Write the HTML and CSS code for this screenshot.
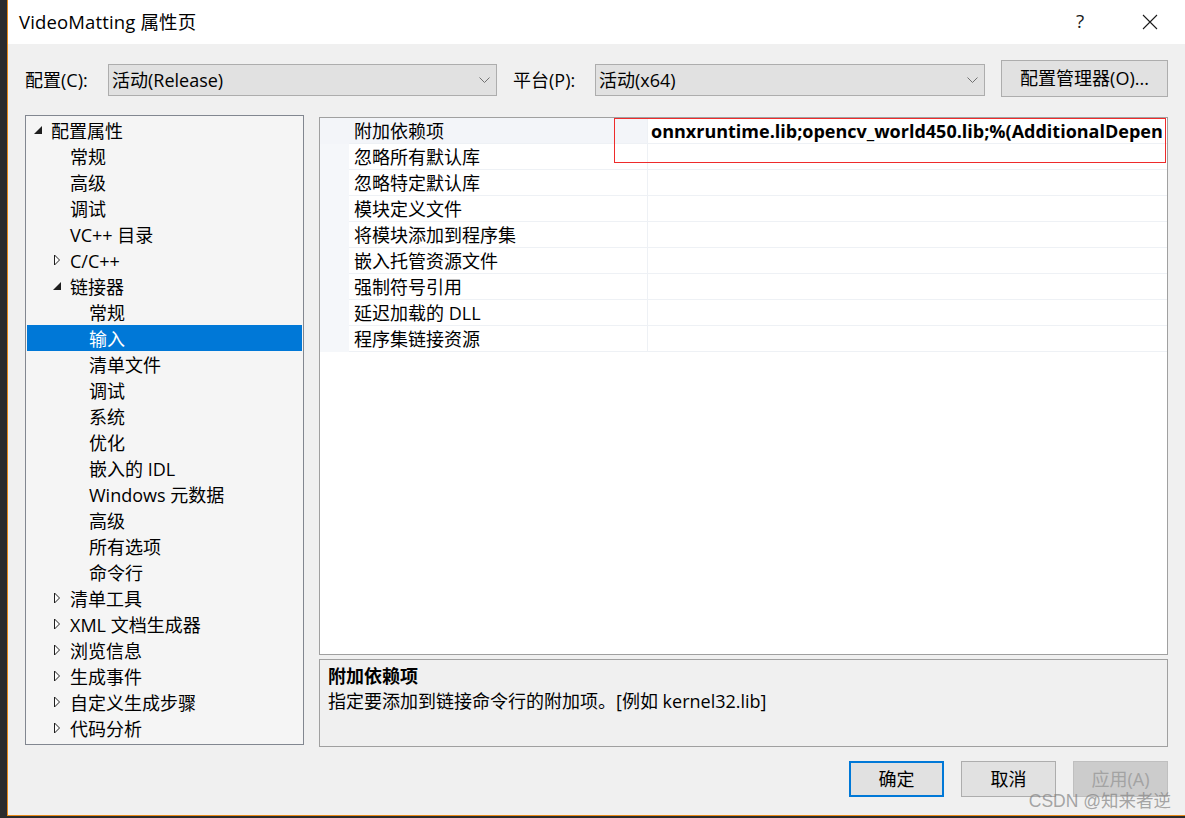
FILE: index.html
```html
<!DOCTYPE html>
<html lang="zh-CN">
<head>
<meta charset="utf-8">
<title>VideoMatting 属性页</title>
<link rel="stylesheet" href="styles.css">
</head>
<body>
<div class="window">
  <div class="titlebar">
    <div class="title">VideoMatting 属性页</div>
    <div class="caption">
      <span class="cap-btn help">?</span>
      <span class="cap-btn close"><svg width="16" height="16" viewBox="0 0 16 16"><path d="M1 1 L15 15 M15 1 L1 15" stroke="#1a1a1a" stroke-width="1.1" fill="none"/></svg></span>
    </div>
  </div>

  <div class="content">
    <div class="toolbar">
      <span class="tb-label lab1">配置(C):</span>
      <div class="combo combo1"><span class="combo-text">活动(Release)</span><svg class="chev" width="11" height="7" viewBox="0 0 11 7"><polyline points="0.5,0.5 5.5,5.5 10.5,0.5" fill="none" stroke="#707070" stroke-width="1"/></svg></div>
      <span class="tb-label lab2">平台(P):</span>
      <div class="combo combo2"><span class="combo-text">活动(x64)</span><svg class="chev" width="11" height="7" viewBox="0 0 11 7"><polyline points="0.5,0.5 5.5,5.5 10.5,0.5" fill="none" stroke="#707070" stroke-width="1"/></svg></div>
      <button class="btn mgr">配置管理器(O)...</button>
    </div>

    <div class="panels">
      <div class="tree">
        <div class="node l0"><span class="tog"><svg width="9" height="9" viewBox="0 0 9 9"><polygon points="8,0 8,8 0,8" fill="#1e1e1e"/></svg></span><span class="txt">配置属性</span></div>
        <div class="node l1"><span class="tog"></span><span class="txt">常规</span></div>
        <div class="node l1"><span class="tog"></span><span class="txt">高级</span></div>
        <div class="node l1"><span class="tog"></span><span class="txt">调试</span></div>
        <div class="node l1"><span class="tog"></span><span class="txt">VC++ 目录</span></div>
        <div class="node l1"><span class="tog"><svg width="8" height="12" viewBox="0 0 8 12"><polygon points="1.5,1 6.5,6 1.5,11" fill="#ffffff" stroke="#1e1e1e" stroke-width="1"/></svg></span><span class="txt">C/C++</span></div>
        <div class="node l1"><span class="tog"><svg width="9" height="9" viewBox="0 0 9 9"><polygon points="8,0 8,8 0,8" fill="#1e1e1e"/></svg></span><span class="txt">链接器</span></div>
        <div class="node l2"><span class="tog"></span><span class="txt">常规</span></div>
        <div class="node l2 selected"><span class="tog"></span><span class="txt">输入</span></div>
        <div class="node l2"><span class="tog"></span><span class="txt">清单文件</span></div>
        <div class="node l2"><span class="tog"></span><span class="txt">调试</span></div>
        <div class="node l2"><span class="tog"></span><span class="txt">系统</span></div>
        <div class="node l2"><span class="tog"></span><span class="txt">优化</span></div>
        <div class="node l2"><span class="tog"></span><span class="txt">嵌入的 IDL</span></div>
        <div class="node l2"><span class="tog"></span><span class="txt">Windows 元数据</span></div>
        <div class="node l2"><span class="tog"></span><span class="txt">高级</span></div>
        <div class="node l2"><span class="tog"></span><span class="txt">所有选项</span></div>
        <div class="node l2"><span class="tog"></span><span class="txt">命令行</span></div>
        <div class="node l1"><span class="tog"><svg width="8" height="12" viewBox="0 0 8 12"><polygon points="1.5,1 6.5,6 1.5,11" fill="#ffffff" stroke="#1e1e1e" stroke-width="1"/></svg></span><span class="txt">清单工具</span></div>
        <div class="node l1"><span class="tog"><svg width="8" height="12" viewBox="0 0 8 12"><polygon points="1.5,1 6.5,6 1.5,11" fill="#ffffff" stroke="#1e1e1e" stroke-width="1"/></svg></span><span class="txt">XML 文档生成器</span></div>
        <div class="node l1"><span class="tog"><svg width="8" height="12" viewBox="0 0 8 12"><polygon points="1.5,1 6.5,6 1.5,11" fill="#ffffff" stroke="#1e1e1e" stroke-width="1"/></svg></span><span class="txt">浏览信息</span></div>
        <div class="node l1"><span class="tog"><svg width="8" height="12" viewBox="0 0 8 12"><polygon points="1.5,1 6.5,6 1.5,11" fill="#ffffff" stroke="#1e1e1e" stroke-width="1"/></svg></span><span class="txt">生成事件</span></div>
        <div class="node l1"><span class="tog"><svg width="8" height="12" viewBox="0 0 8 12"><polygon points="1.5,1 6.5,6 1.5,11" fill="#ffffff" stroke="#1e1e1e" stroke-width="1"/></svg></span><span class="txt">自定义生成步骤</span></div>
        <div class="node l1"><span class="tog"><svg width="8" height="12" viewBox="0 0 8 12"><polygon points="1.5,1 6.5,6 1.5,11" fill="#ffffff" stroke="#1e1e1e" stroke-width="1"/></svg></span><span class="txt">代码分析</span></div>
      </div>

      <div class="right">
        <div class="grid">
          <div class="prow sel"><span class="gut"></span><span class="pname">附加依赖项</span><span class="pval">onnxruntime.lib;opencv_world450.lib;%(AdditionalDepen</span></div>
          <div class="prow"><span class="gut"></span><span class="pname">忽略所有默认库</span><span class="pval"></span></div>
          <div class="prow"><span class="gut"></span><span class="pname">忽略特定默认库</span><span class="pval"></span></div>
          <div class="prow"><span class="gut"></span><span class="pname">模块定义文件</span><span class="pval"></span></div>
          <div class="prow"><span class="gut"></span><span class="pname">将模块添加到程序集</span><span class="pval"></span></div>
          <div class="prow"><span class="gut"></span><span class="pname">嵌入托管资源文件</span><span class="pval"></span></div>
          <div class="prow"><span class="gut"></span><span class="pname">强制符号引用</span><span class="pval"></span></div>
          <div class="prow"><span class="gut"></span><span class="pname">延迟加载的 DLL</span><span class="pval"></span></div>
          <div class="prow"><span class="gut"></span><span class="pname">程序集链接资源</span><span class="pval"></span></div>
          <div class="annot"></div>
        </div>
        <div class="desc">
          <div class="desc-title">附加依赖项</div>
          <div class="desc-text">指定要添加到链接命令行的附加项。[例如 kernel32.lib]</div>
        </div>
      </div>
    </div>

    <div class="footer">
      <button class="btn action default">确定</button>
      <button class="btn action">取消</button>
      <button class="btn action disabled">应用(A)</button>
    </div>

    <div class="watermark">CSDN @知来者逆</div>
  </div>
</div>
</body>
</html>
```

FILE: styles.css
```css
* { box-sizing: border-box; }

html, body {
  margin: 0;
  padding: 0;
  width: 1185px;
  height: 818px;
  overflow: hidden;
  background: #2b2b2d;
}

body {
  font-family: "Open Sans", "Noto Sans CJK SC", sans-serif;
  font-size: 18px;
  color: #000;
}

.window {
  margin-left: 7px;
  width: 1178px;
  height: 816px;
  border-left: 1px solid #e8891a;
  border-bottom: 1px solid #e8891a;
  background: #f0f0f0;
  display: flex;
  flex-direction: column;
}

/* title bar */
.titlebar {
  height: 44px;
  background: #ffffff;
  display: flex;
  align-items: center;
  justify-content: space-between;
}
.title {
  padding-left: 11px;
  font-size: 18.5px;
  letter-spacing: 0.15px;
  line-height: 44px;
  padding-bottom: 1px;
}
.caption { display: flex; height: 44px; }
.cap-btn {
  width: 70px;
  height: 44px;
  display: flex;
  align-items: center;
  justify-content: center;
}
.help { font-size: 19px; color: #1a1a1a; padding-bottom: 2px; }
.close { padding-bottom: 1px; }

/* content */
.content {
  position: relative;
  flex: 1;
  padding: 16px 17px 0 17px;
  display: flex;
  flex-direction: column;
}

.toolbar {
  display: flex;
  align-items: flex-start;
  height: 37px;
}
.tb-label {
  height: 32px;
  margin-top: 4px;
  line-height: 32px;
}
.lab1 { width: 83px; }
.lab2 { width: 82px; margin-left: 16px; }

.combo {
  margin-top: 4px;
  height: 32px;
  background: #e1e1e1;
  border: 1px solid #adadad;
  display: flex;
  align-items: center;
  justify-content: space-between;
  padding: 0 6px 0 3px;
}
.combo1 { width: 389px; }
.combo2 { width: 390px; }
.combo-text { line-height: 30px; }
.chev { margin-top: 1px; }

.btn {
  font-family: "Open Sans", "Noto Sans CJK SC", sans-serif;
  font-size: 18px;
  color: #000;
  background: #e1e1e1;
  border: 1px solid #adadad;
  padding: 0;
  margin: 0;
}
.mgr {
  width: 167px;
  height: 37px;
  margin-left: 16px;
  line-height: 35px;
}

/* panels */
.panels {
  margin-top: 18px;
  display: grid;
  grid-template-columns: 279px 849px;
  column-gap: 15px;
  align-items: start;
}

.tree {
  height: 630px;
  background: #f5f5f5;
  border: 1px solid #828790;
  padding: 1px;
}
.node {
  height: 26px;
  display: flex;
  align-items: flex-start;
  white-space: nowrap;
}
.node.l0 { padding-left: 7px; }
.node.l1 { padding-left: 26px; }
.node.l2 { padding-left: 45px; }
.tog {
  width: 17px;
  height: 26px;
  flex: none;
  display: flex;
  align-items: center;
}
.txt {
  line-height: 26px;
  padding-top: 1px;
}
.node.selected {
  background: #0078d7;
  color: #ffffff;
}

.right {
  margin-top: 2px;
  display: flex;
  flex-direction: column;
  gap: 4px;
}

.grid {
  position: relative;
  height: 538px;
  background: #ffffff;
  border: 1px solid #a0a0a0;
  overflow: hidden;
}
.prow {
  display: grid;
  grid-template-columns: 29px 299px 519px;
  height: 26px;
}
.gut { background: #f5f7fa; }
.pname {
  padding-left: 5px;
  padding-top: 2px;
  line-height: 23px;
  border-bottom: 1px solid #eef1f5;
  border-right: 1px solid #eef1f5;
  white-space: nowrap;
  background: #ffffff;
}
.pval {
  padding-left: 3px;
  padding-top: 2px;
  line-height: 23px;
  border-bottom: 1px solid #eef1f5;
  white-space: nowrap;
  overflow: hidden;
  font-weight: 700;
  background: #ffffff;
}
.prow.sel .gut,
.prow.sel .pname { background: #f3f5f9; }

.annot {
  position: absolute;
  left: 294px;
  top: 0;
  width: 552px;
  height: 45px;
  border: 1px solid #ee2b2b;
  pointer-events: none;
}

.desc {
  height: 88px;
  background: #f0f0f0;
  border: 1px solid #a0a0a0;
  padding: 4px 8px 0 8px;
}
.desc-title { font-weight: 700; line-height: 25px; }
.desc-text { line-height: 25px; }

/* footer */
.footer {
  margin-top: 14px;
  display: flex;
  justify-content: flex-end;
  gap: 17px;
}
.action {
  width: 95px;
  height: 36px;
  line-height: 34px;
}
.action.default {
  border: 2px solid #0078d7;
  line-height: 32px;
}
.action.disabled {
  background: #cccccc;
  border-color: #bfbfbf;
  color: #a3a3a3;
}

.watermark {
  position: absolute;
  right: 14px;
  top: 743px;
  font-family: "Liberation Sans", "Noto Sans CJK SC", sans-serif;
  font-size: 17.5px;
  color: rgba(130, 130, 130, 0.7);
  white-space: nowrap;
}
```
